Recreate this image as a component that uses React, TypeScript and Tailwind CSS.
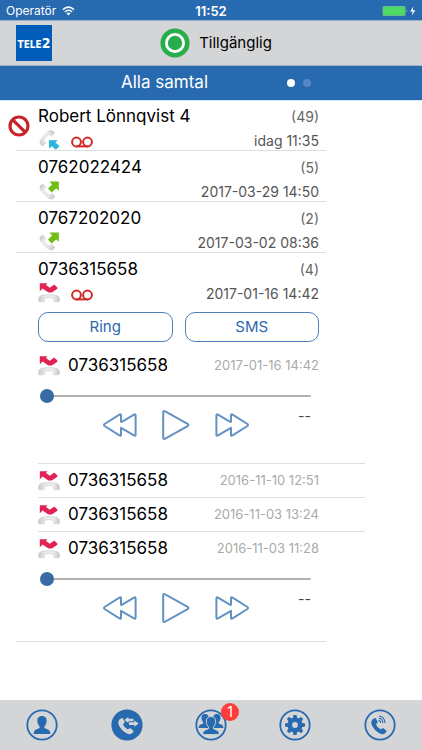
import { useState } from "react";
import { clsx } from "clsx";

type Direction = "incoming" | "outgoing" | "missed";

type HistoryType = {
  date: string;
  voicemail?: boolean;
};

type CallType = {
  caller: string;
  count: number;
  date: string;
  direction: Direction;
  voicemail?: boolean;
  blocked?: boolean;
  history?: HistoryType[];
};

const calls: CallType[] = [
  {
    caller: "Robert Lönnqvist 4",
    count: 49,
    date: "idag 11:35",
    direction: "incoming",
    voicemail: true,
    blocked: true,
  },
  {
    caller: "0762022424",
    count: 5,
    date: "2017-03-29 14:50",
    direction: "outgoing",
  },
  {
    caller: "0767202020",
    count: 2,
    date: "2017-03-02 08:36",
    direction: "outgoing",
  },
  {
    caller: "0736315658",
    count: 4,
    date: "2017-01-16 14:42",
    direction: "missed",
    voicemail: true,
    history: [
      { date: "2017-01-16 14:42", voicemail: true },
      { date: "2016-11-10 12:51" },
      { date: "2016-11-03 13:24" },
      { date: "2016-11-03 11:28", voicemail: true },
    ],
  },
];

// drawn lying down, the other directions turn it
const HANDSET =
  "M.6 19V16.4C1 13.6 5 12.6 11 12.6S21 13.6 21.4 16.4V19Q21.4 19.8 20.6 19.8H16.4Q15.6 19.8 15.6 19V16.4C13 15.4 9 15.4 6.4 16.4V19Q6.4 19.8 5.6 19.8H1.4Q.6 19.8 .6 19Z";

const handsetTransform = {
  incoming: "translate(8.4 8.4) rotate(-48) scale(.86) translate(-11 -16.2)",
  outgoing: "translate(8.6 12.4) rotate(-135) scale(.86) translate(-11 -16.2)",
  missed: undefined,
};

const CallIcon = ({ direction }: { direction: Direction }) => (
  <svg viewBox="0 0 22 22" className="size-[22px] shrink-0" aria-hidden="true">
    <defs>
      <linearGradient id={`handset-${direction}`} x1="0" x2="1">
        <stop offset="0" stopColor="#c9c9c9" />
        <stop offset=".28" stopColor="#e6e6e6" />
        <stop offset=".7" stopColor="#f0f0f0" />
        <stop offset="1" stopColor="#c4c4c4" />
      </linearGradient>
    </defs>
    <path
      d={HANDSET}
      fill={`url(#handset-${direction})`}
      stroke="#c6c6c6"
      strokeWidth=".5"
      transform={handsetTransform[direction]}
    />
    {direction === "incoming" && (
      <path
        d="M10.8 11.2H19.8L17.4 13.4L21.6 17L17.8 20.8L13.8 17.2L11.2 19.8Z"
        fill="#2bb5dc"
      />
    )}
    {direction === "outgoing" && (
      <path
        d="M11.4 1.4H20.8V10.8L18.2 8.4L13.6 12.4L10 8.6L14.2 4.4Z"
        fill="#6fbe12"
      />
    )}
    {direction === "missed" && (
      <path
        d="M1.8 1.2H9.4L8 3L11.8 5.8L16.2 2.4L19.4 5.6V6.8L13.8 10.6H10.4L4.6 6.6L1.8 9.2Z"
        fill="#df2455"
      />
    )}
  </svg>
);

const VoicemailIcon = () => (
  <svg
    viewBox="0 0 22 12"
    className="mt-1 h-3 w-[22px]"
    fill="none"
    stroke="#d02a26"
    strokeWidth="2"
    aria-hidden="true"
  >
    <circle cx="5.5" cy="6" r="4.4" />
    <circle cx="16.5" cy="6" r="4.4" />
    <path d="M5.5 10.4H16.5" />
  </svg>
);

const BlockedIcon = () => (
  <svg
    viewBox="0 0 22 22"
    className="size-[22px] shrink-0"
    fill="none"
    stroke="#c8242b"
    strokeWidth="3.2"
    aria-hidden="true"
  >
    <circle cx="11" cy="11" r="9" />
    <path d="M4.8 4.8L17.2 17.2" />
  </svg>
);

const SkipIcon = ({ flip }: { flip?: boolean }) => (
  <svg
    viewBox="0 0 34 24"
    className={clsx("h-6 w-[34px]", flip && "-scale-x-100")}
    fill="none"
    stroke="#6391c3"
    strokeWidth="2"
    strokeLinejoin="round"
    aria-hidden="true"
  >
    <path d="M18 9.6V2.6Q18 .8 16.4 1.6L1.6 11Q.4 12 1.6 13L16.4 22.4Q18 23.2 18 21.4V14.8L31 22.4Q32.6 23.2 32.6 21.4V2.6Q32.6 .8 31 1.6L18 9.4" />
  </svg>
);

const PlayIcon = () => (
  <svg
    viewBox="0 0 28 30"
    className="h-[30px] w-7"
    fill="none"
    stroke="#6391c3"
    strokeWidth="2"
    strokeLinejoin="round"
    aria-hidden="true"
  >
    <path d="M1.2 2.4Q1.2 .2 3.2 1.4L25.6 13.8Q27.2 15 25.6 16.2L3.2 28.6Q1.2 29.8 1.2 27.6Z" />
  </svg>
);

const Player = ({ date }: { date: string }) => {
  const [position, setPosition] = useState(0);

  return (
    <div className="mr-[54px] pt-[7px] pb-[18px] pl-[2px]">
      <input
        type="range"
        min={0}
        max={100}
        value={position}
        onChange={(e) => setPosition(Number(e.target.value))}
        aria-label={`Position ${date}`}
        className="block h-3.5 w-full appearance-none bg-transparent [&::-webkit-slider-runnable-track]:h-0.5 [&::-webkit-slider-runnable-track]:rounded-full [&::-webkit-slider-runnable-track]:bg-[#b1b1b1] [&::-webkit-slider-thumb]:-mt-1.5 [&::-webkit-slider-thumb]:size-3.5 [&::-webkit-slider-thumb]:appearance-none [&::-webkit-slider-thumb]:rounded-full [&::-webkit-slider-thumb]:bg-[#386ba3]"
      />
      <div className="mt-[7px] flex">
        <div className="flex-1"></div>
        <div className="flex items-center gap-[25px]">
          <button aria-label="Bakåt">
            <SkipIcon />
          </button>
          <button aria-label="Spela">
            <PlayIcon />
          </button>
          <button aria-label="Framåt">
            <SkipIcon flip />
          </button>
        </div>
        <p className="flex-1 text-right text-sm leading-3 text-[#444]">--</p>
      </div>
    </div>
  );
};

const HistoryItem = ({
  caller,
  item,
}: {
  caller: string;
  item: HistoryType;
}) => (
  <>
    <div className="mr-[46px] flex h-[33px] items-center">
      <CallIcon direction="missed" />
      <p className="ml-2 flex-1 text-[17px]">{caller}</p>
      <p className="text-[13px] text-[#aaa]">{item.date}</p>
    </div>
    {item.voicemail && <Player date={item.date} />}
  </>
);

const Call = ({ call }: { call: CallType }) => {
  const [latest, ...older] = call.history ?? [];

  return (
    <li className="flex">
      <div className="flex w-4 shrink-0 items-start pt-[15px] pl-2">
        {call.blocked && <BlockedIcon />}
      </div>
      <div className="mr-24 min-w-0 flex-1 border-b border-[#dedede] pl-[22px]">
        <div className="pt-[5px] pr-[7px]">
          <div className="flex h-6 items-center justify-between">
            <h2 className="text-[17px]">{call.caller}</h2>
            <p className="text-sm text-[#666]">({call.count})</p>
          </div>
          <div className="flex h-[21px] items-center">
            <CallIcon direction={call.direction} />
            <div className="ml-[11px] flex-1">
              {call.voicemail && <VoicemailIcon />}
            </div>
            <p className="pt-0.5 text-sm text-[#555]">{call.date}</p>
          </div>
        </div>
        {latest && (
          <>
            <div className="mt-[9px] mr-[7px] flex gap-3 text-[15px] text-[#2c69ae]">
              <button className="h-[30px] flex-1 rounded-[10px] border border-[#4b7dba]">
                Ring
              </button>
              <button className="h-[30px] flex-1 rounded-[10px] border border-[#4b7dba]">
                SMS
              </button>
            </div>
            {/* the history runs wider than the call it belongs to */}
            <div className="mt-[7px] -mr-[39px]">
              <HistoryItem caller={call.caller} item={latest} />
              <ul className="mt-[5px]">
                {older.map((item) => (
                  <li key={item.date} className="border-t border-[#dedede]">
                    <HistoryItem caller={call.caller} item={item} />
                  </li>
                ))}
              </ul>
            </div>
          </>
        )}
      </div>
    </li>
  );
};

const PERSON =
  "M16 7C12.6 7 11 9.2 11.4 12.6C11.5 14.8 12.6 16.4 13.6 17.4V19L9.6 20.8Q7.6 21.8 7.6 25H24.4Q24.4 21.8 22.4 20.8L18.4 19V17.4C19.4 16.4 20.5 14.8 20.6 12.6C21 9.2 19.4 7 16 7Z";
const PHONE =
  "M8.4 10.6L10.4 9.2Q11.4 8.8 12 9.8L13.6 12.6Q14 13.4 13.2 14.2L11.9 15.2Q13.2 18.6 16.8 20.6L18.2 19.4Q19 18.8 19.8 19.4L22.2 21.4Q23 22.2 22.2 23L20.4 24.8Q18.6 25.8 15.4 24.2Q10 21.4 7.6 15.6Q6.8 12.2 8.4 10.6Z";

const tabs = [
  { label: "Profil", icon: <path d={PERSON} fill="#286ab0" /> },
  {
    label: "Samtal",
    active: true,
    icon: (
      <g fill="#d4d5d7">
        <path d={PHONE} />
        <path d="M13.4 11L17.4 8V9.8H22.4V12.2H17.4V14Z" />
        <path d="M27.6 14.6L23.4 11.4V13.2H18V16H23.4V17.8Z" />
      </g>
    ),
  },
  {
    label: "Kontakter",
    badge: 1,
    icon: (
      <g fill="#286ab0">
        <path d={PERSON} transform="translate(-2.4 -.4) scale(.78)" />
        <path d={PERSON} transform="translate(9.4 -.4) scale(.78)" />
        <path
          d={PERSON}
          stroke="#d4d5d7"
          strokeWidth=".9"
          transform="translate(0 .6)"
        />
      </g>
    ),
  },
  {
    label: "Inställningar",
    icon: (
      <>
        <circle
          cx="16"
          cy="16"
          r="5.2"
          fill="none"
          stroke="#286ab0"
          strokeWidth="4.6"
        />
        {[0, 45, 90, 135, 180, 225, 270, 315].map((angle) => (
          <path
            key={angle}
            d="M13.8 9.6L14.4 6H17.6L18.2 9.6Z"
            fill="#286ab0"
            transform={`rotate(${angle} 16 16)`}
          />
        ))}
      </>
    ),
  },
  {
    label: "Ring upp",
    icon: (
      <>
        <path d={PHONE} fill="#286ab0" />
        <path
          d="M14.6 11.4Q16.6 11.8 16.8 14M14.8 9.2Q18.6 9.8 18.9 14M15 7Q20.6 7.8 21 14"
          fill="none"
          stroke="#286ab0"
          strokeWidth="1.1"
        />
      </>
    ),
  },
];

const StatusBar = () => (
  <div className="grid h-5 grid-cols-3 items-center bg-[#286ab0] px-[6px] pt-0.5 text-white">
    <div className="flex items-center gap-1.5 text-xs">
      <span>Operatör</span>
      <svg viewBox="0 0 13 10" className="h-2.5 w-[13px]" aria-hidden="true">
        <path
          d="M.9 3.6Q6.5 -1.4 12.1 3.6M2.9 5.8Q6.5 2.8 10.1 5.8"
          fill="none"
          stroke="white"
          strokeWidth="1.5"
        />
        <path d="M4.4 7.3Q6.5 5.8 8.6 7.3L6.5 9.6Z" fill="white" />
      </svg>
    </div>
    <p className="text-center text-[13px] leading-4 font-semibold">11:52</p>
    <svg
      viewBox="0 0 34 12"
      className="h-3 w-[34px] justify-self-end"
      aria-hidden="true"
    >
      <rect x=".5" y="1" width="23" height="10" rx="1.5" fill="#7f9fbd" />
      <rect x="1" y="1.5" width="22" height="9" rx="1" fill="#4cd964" />
      <path d="M24.4 4.4Q26 6 24.4 7.6Z" fill="#9fd7c0" />
      <path d="M31.4 1.4L28.2 6.6H30.6L29.8 10.6L33.4 5.2H30.8Z" fill="white" />
    </svg>
  </div>
);

export default function App() {
  const [page, setPage] = useState(0);

  return (
    <div className="flex min-h-screen flex-col bg-white font-['Inter','Liberation_Sans',sans-serif] text-black">
      <header className="relative shadow-[0_1px_0_#d3e9fb]">
        <StatusBar />
        <div className="relative flex h-[46px] items-center justify-center border-y border-[#9fb0c4] bg-[#d4d5d7] pl-2.5">
          {/* logo */}
          <div className="absolute left-4 flex size-9 items-baseline justify-center bg-[#005cb9] pt-2 font-['Liberation_Sans_Narrow','DejaVu_Sans_Condensed',sans-serif] font-bold text-white">
            <span className="text-[10px] leading-5">TELE</span>
            <span className="text-sm leading-5">2</span>
          </div>
          <div className="flex items-center gap-[9px]">
            <svg
              viewBox="0 0 30 30"
              className="size-[30px]"
              aria-hidden="true"
            >
              <circle cx="15" cy="15" r="14.6" fill="#27ae4b" />
              <circle
                cx="15"
                cy="15"
                r="8.6"
                fill="none"
                stroke="white"
                strokeWidth="2.8"
              />
            </svg>
            <p className="text-[15px]">Tillgänglig</p>
          </div>
        </div>
        <div className="flex h-[34px] items-center justify-center gap-[79px] bg-[#286ab0] pl-2.5">
          <h1 className="text-[17px] text-white">Alla samtal</h1>
          <div className="flex gap-2">
            {["Alla samtal", "Missade samtal"].map((label, i) => (
              <button
                key={label}
                aria-label={label}
                onClick={() => setPage(i)}
                className={clsx(
                  "size-2 rounded-full",
                  page === i ? "bg-white" : "bg-[#5588c2]"
                )}
              />
            ))}
          </div>
        </div>
      </header>

      <main className="flex-1">
        <ul>
          {calls.map((call) => (
            <Call key={call.caller} call={call} />
          ))}
        </ul>
      </main>

      <nav className="grid h-[50px] grid-cols-5 items-center justify-items-center bg-[#d4d5d7]">
        {tabs.map((tab) => (
          <button key={tab.label} aria-label={tab.label} className="relative">
            <svg viewBox="0 0 32 32" className="size-8" aria-hidden="true">
              <circle
                cx="16"
                cy="16"
                r="14.7"
                fill={tab.active ? "#286ab0" : "none"}
                stroke="#286ab0"
                strokeWidth="1.8"
              />
              {tab.icon}
            </svg>
            {tab.badge && (
              <span className="absolute -top-1.5 -right-3 flex size-[18px] items-center justify-center rounded-full bg-[#fc3d39] text-sm text-white">
                {tab.badge}
              </span>
            )}
          </button>
        ))}
      </nav>
    </div>
  );
}
